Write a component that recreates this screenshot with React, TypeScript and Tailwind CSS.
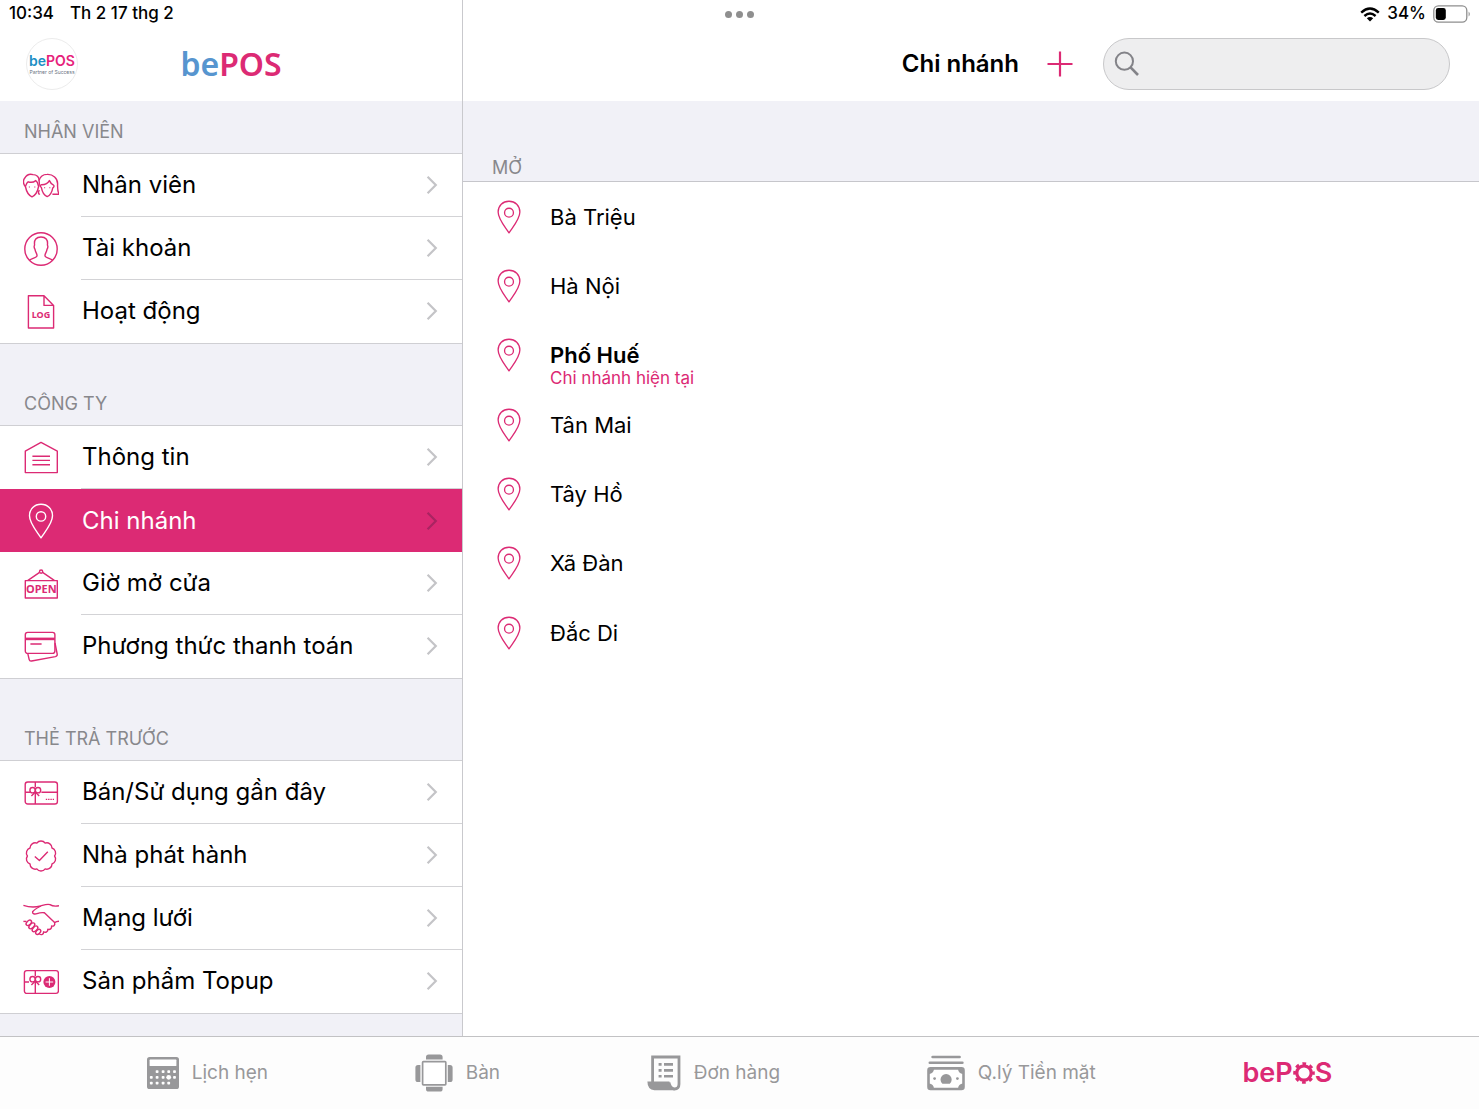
import React from 'react';

type IconProps = { className?: string };

const lineIcon = {
    viewBox: '0 0 36 36',
    fill: 'none',
    stroke: 'currentColor',
    strokeWidth: 1.4,
    strokeLinejoin: 'round' as const,
    'aria-hidden': true,
};

const StaffIcon = ({ className }: IconProps) => (
    <svg {...lineIcon} className={className}>
        <path d="M2.4 18.5 C0 16.5 0 12 1.6 10.3 C3.5 7 7 5.8 10 6.6 C13.5 6.6 16.4 9 16 12.5 C16.6 15 16.4 17 15.6 18.5" />
        <path d="M2.4 18.5 C3.4 23.5 6.2 27.6 9 28.8 C12 27.6 14.6 23.5 15.6 18.5 L14.4 14.5 L12.8 12.6 C10.5 14.4 7.5 14.6 5.2 13.8 L3.8 15.2 Z" />
        <path d="M17 26 C14.8 26.6 15.4 24.2 16.2 22 M16 12.5 C17.2 8.5 20.5 6.4 24 6.4 C30 6 34.8 10.5 34.6 16 C34.4 20 34.6 23.4 36 26.2 L29.4 26.2" />
        <path d="M18.4 19.6 C16.8 18.4 17.2 16.6 18.6 16.8 C22 16.6 25.4 14.6 26.4 12.6 C27.4 14.8 28.8 16.2 30.2 16.8 C31.6 17.4 31 19.4 29.8 19.8 C29 24 27.2 27.4 24.2 28.6 C21.2 27.4 19.2 24 18.4 19.6 Z" />
        <path d="M6.4 18.4 V19.4 M11.8 18.4 V19.4 M21.6 19.2 V20.2 M26.8 19.2 V20.2" strokeWidth="1.1" />
    </svg>
);

const AccountIcon = ({ className }: IconProps) => (
    <svg {...lineIcon} className={className}>
        <circle cx="18" cy="18" r="16.2" />
        <path d="M6.4 29.3 C7.4 27.4 13.6 27 14 24.8 C14.2 22.6 12.4 21.6 12 18.4 C10.8 16.4 11 15 11.6 14 C10.8 8.6 13.4 6 18 6 C22.6 6 25.2 8.6 24.4 14 C25 15 25.2 16.4 24 18.4 C23.6 21.6 21.8 22.6 22 24.8 C22.4 27 28.6 27.4 29.6 29.3" />
    </svg>
);

const LogIcon = ({ className }: IconProps) => (
    <svg {...lineIcon} className={className}>
        <path d="M5.4 1.8 H21 L30.6 11.4 V34 H5.4 Z M21 1.8 V11.4 H30.6" />
        <text x="18" y="24" textAnchor="middle" fill="currentColor" stroke="none" className="font-['Liberation_Sans_Narrow','Noto_Sans',sans-serif] text-[9px] font-bold">LOG</text>
    </svg>
);

const InfoIcon = ({ className }: IconProps) => (
    <svg {...lineIcon} className={className}>
        <path d="M2.3 11.2 L18 2.4 L34.3 11.2 V32.6 H2.3 Z M9.4 16.2 H27 M9.4 20.4 H27 M9.4 24.7 H27" />
    </svg>
);

const PinIcon = ({ className }: IconProps) => (
    <svg {...lineIcon} className={className}>
        <path d="M18 34.8 C13.5 28 6.5 20.4 6.5 12.8 C6.5 6 11.4 1.3 18 1.3 C24.6 1.3 29.5 6 29.5 12.8 C29.5 20.4 22.5 28 18 34.8 Z" />
        <circle cx="18" cy="13.4" r="4.7" />
    </svg>
);

const OpenIcon = ({ className }: IconProps) => (
    <svg {...lineIcon} className={className}>
        <path d="M2.3 14.6 H34.3 V32 H2.3 Z M4.6 14.6 L16.6 6.4 M31.6 14.6 L19.6 6.4" />
        <circle cx="18.1" cy="5.6" r="1.6" />
        <text x="18.3" y="27.4" textAnchor="middle" fill="currentColor" stroke="none" className="font-['Liberation_Sans_Narrow','Noto_Sans',sans-serif] text-[11px] font-bold">OPEN</text>
    </svg>
);

const CardsIcon = ({ className }: IconProps) => (
    <svg {...lineIcon} className={className}>
        <rect x="2.3" y="3.4" width="29.6" height="21" rx="2.4" />
        <path d="M2.3 9.9 H31.9" strokeWidth="2.6" />
        <path d="M7.4 15 H18.6 M4.8 24.6 L6.2 30.6 C6.5 31.8 7.4 32.2 8.6 32 L32.4 27.6 C33.8 27.3 34.4 26.4 34.2 25.2 L32 14" />
    </svg>
);

const Bow = () => (
    <>
        <circle cx="9.6" cy="15.2" r="2.7" />
        <circle cx="15" cy="15.2" r="2.7" />
        <path d="M12.3 17 L8.4 21 M12.3 17 L16.2 21" />
    </>
);

const GiftCardIcon = ({ className }: IconProps) => (
    <svg {...lineIcon} className={className}>
        <rect x="2.2" y="7" width="32.2" height="22" rx="2.6" />
        <path d="M12.3 7 V12 M12.3 18 V29 M2.2 17.2 H7 M18.4 17.2 H34.4" />
        <Bow />
        <path d="M22.8 24.4 H31" strokeDasharray="1.4 0.9" />
    </svg>
);

const TopupIcon = ({ className }: IconProps) => (
    <svg {...lineIcon} className={className}>
        <rect x="1.4" y="6.6" width="34" height="22.8" rx="2.4" />
        <path d="M12.3 6.6 V12 M12.3 18 V29.4 M1.4 18 H6" />
        <Bow />
        <circle cx="26.4" cy="18" r="6" fill="currentColor" stroke="none" />
        <path d="M22.6 18 H30.2 M26.4 14.2 V21.8" stroke="#fff" strokeWidth="1" />
    </svg>
);

const SealIcon = ({ className }: IconProps) => {
    const lobes = 10;
    const points = Array.from({ length: lobes }, (_, i) => {
        const a = ((i + 0.5) / lobes) * Math.PI * 2 - Math.PI / 2;
        return `${(18 + 13.6 * Math.cos(a)).toFixed(2)} ${(18 + 13.6 * Math.sin(a)).toFixed(2)}`;
    });
    const d = `M${points[lobes - 1]} ` + points.map((p) => `A5.2 5.2 0 0 1 ${p}`).join(' ') + ' Z';
    return (
        <svg {...lineIcon} className={className}>
            <path d={d} />
            <path d="M11.8 18.4 L16.4 22.6 L24.8 13.8" />
        </svg>
    );
};

const HandshakeIcon = ({ className }: IconProps) => (
    <svg {...lineIcon} className={className}>
        <path d="M0.4 4.4 C6 6.2 12 6.4 17.6 5 C21 4 24 2.6 27 3.6 C29 5 31 5.8 36 4.8" />
        <path d="M17.8 5 C15 6.6 11.6 8.2 9.6 10.8 C9 12.8 11.6 13.4 14 12.6 C16.4 11.8 19 11.4 21.4 11.8 L31.6 21.6" />
        <path d="M36 20.2 C33.6 20.2 32.6 20.8 31.6 21.6 C32.4 24 30.6 25.6 28.6 25 C29 27.6 27 29 24.8 28.2 C25 30.6 22.8 31.8 20.6 30.8 C20.8 33.4 18.4 34.4 16.4 33" />
        <path d="M0.4 20.4 H3.4" />
        <ellipse cx="5.8" cy="21.8" rx="3.2" ry="2" transform="rotate(-45 5.8 21.8)" />
        <ellipse cx="8.8" cy="24.8" rx="3.6" ry="2" transform="rotate(-45 8.8 24.8)" />
        <ellipse cx="12" cy="27.8" rx="3.4" ry="2" transform="rotate(-45 12 27.8)" />
        <ellipse cx="15.2" cy="30.8" rx="3" ry="1.9" transform="rotate(-45 15.2 30.8)" />
    </svg>
);

const ChevronIcon = ({ className }: IconProps) => (
    <svg viewBox="0 0 12 20" fill="none" stroke="currentColor" strokeWidth="2.2" aria-hidden="true" className={className}>
        <path d="M1.6 1.8 L9.8 10 L1.6 18.2" />
    </svg>
);

const CalendarIcon = () => {
    const dots = [[10, 14.6], [16, 14.6], [21.6, 14.6], [27.4, 14.6], [4.2, 20.2], [10, 20.2], [16, 20.2], [21.6, 20.2], [27.4, 20.2], [4.2, 26], [10, 26], [16, 26], [21.6, 26]];
    return (
        <svg viewBox="0 0 32 32" aria-hidden="true" className="size-8">
            <rect width="32" height="32" rx="2.6" fill="currentColor" />
            <rect x="2.6" y="2.6" width="26.8" height="6.4" rx="0.6" fill="#fff" />
            {dots.map(([x, y]) => (
                <rect key={`${x}-${y}`} x={x - 1.3} y={y - 1.3} width="2.8" height="2.8" rx="0.8" fill="#fff" />
            ))}
            <circle cx="21.7" cy="20.3" r="2.4" fill="#fff" />
        </svg>
    );
};

const TableIcon = () => (
    <svg viewBox="0 0 38 38" fill="currentColor" aria-hidden="true" className="size-[38px]">
        <path d="M11 5.4 V3 Q11 0.4 13.6 0.4 H25 Q27.6 0.4 27.6 3 V5.4 Z M11 32.8 V35 Q11 37.6 13.6 37.6 H25 Q27.6 37.6 27.6 35 V32.8 Z M5.4 11 H3 Q0.4 11 0.4 13.6 V25.4 Q0.4 28 3 28 H5.4 Z M32.8 11 H35 Q37.6 11 37.6 13.6 V25.4 Q37.6 28 35 28 H32.8 Z" />
        <rect x="7.6" y="7.6" width="23.2" height="23.2" rx="0.8" fill="#fff" stroke="currentColor" strokeWidth="1.7" />
    </svg>
);

const ReceiptIcon = () => (
    <svg viewBox="0 0 34 36" aria-hidden="true" className="h-9 w-[34px]">
        <path d="M5.6 27 V2 H32 V29 Q32 34 27.4 34 Q23 33.6 22 27.6" fill="none" stroke="currentColor" strokeWidth="2.8" />
        <path d="M0.4 26.4 H22.4 Q23 33 27.6 35.2 H7.4 Q0.4 34.4 0.4 26.4 Z" fill="currentColor" />
        <path d="M11.6 9.4 H14.6 M17 9.4 H26 M11.6 15.4 H14.6 M17 15.4 H26 M11.6 21.2 H14.6 M17 21.2 H26" fill="none" stroke="currentColor" strokeWidth="2.6" />
    </svg>
);

const CashIcon = () => (
    <svg viewBox="0 0 38 36" aria-hidden="true" className="h-9 w-[38px]">
        <path d="M5.6 2 H32.6 M2.8 7.8 H35.4" stroke="currentColor" strokeWidth="2.6" strokeLinecap="round" />
        <rect x="1.5" y="13.4" width="35" height="20.6" rx="2" fill="#fff" stroke="currentColor" strokeWidth="2.6" />
        <path d="M2 19 V14 H7 Q6.6 18.6 2 19 Z M36 19 V14 H31 Q31.4 18.6 36 19 Z M2 28.6 V33.6 H7 Q6.6 29 2 28.6 Z M36 28.6 V33.6 H31 Q31.4 29 36 28.6 Z" fill="currentColor" />
        <path d="M15.4 28.8 A5.6 5.6 0 1 1 22.8 28.8 Z" fill="currentColor" />
        <circle cx="7.6" cy="23.6" r="1.4" fill="currentColor" />
        <circle cx="30.4" cy="23.6" r="1.4" fill="currentColor" />
    </svg>
);

const GearIcon = () => (
    <svg viewBox="0 0 22 22" fill="none" stroke="currentColor" aria-hidden="true" className="size-[22px]">
        <circle cx="11" cy="11" r="7.2" strokeWidth="3.2" />
        <circle cx="11" cy="11" r="9.4" strokeWidth="2.8" strokeDasharray="3.7 3.68" strokeDashoffset="1.85" />
    </svg>
);

const WifiIcon = () => (
    <svg viewBox="0 0 20 15" fill="none" stroke="currentColor" strokeWidth="2.4" aria-hidden="true" className="h-[15px] w-5">
        <path d="M1.2 5.6 Q10 -2.4 18.8 5.6 M4.4 9 Q10 4 15.6 9" />
        <path d="M10 14.4 L6.8 11.2 Q10 8.6 13.2 11.2 Z" fill="currentColor" stroke="none" />
    </svg>
);

const BatteryIcon = () => (
    <svg viewBox="0 0 38 18" aria-hidden="true" className="h-[18px] w-[38px]">
        <rect x="0.8" y="0.8" width="33" height="16.4" rx="4.6" fill="none" stroke="#8e8e8e" strokeWidth="1.3" />
        <rect x="2.8" y="3" width="10" height="12" rx="2.4" fill="#000" />
        <path d="M35.6 6.4 Q38 9 35.6 11.6 Z" fill="#8e8e8e" />
    </svg>
);

const sections = [
    {
        title: 'NHÂN VIÊN',
        items: [
            { label: 'Nhân viên', Icon: StaffIcon },
            { label: 'Tài khoản', Icon: AccountIcon },
            { label: 'Hoạt động', Icon: LogIcon },
        ],
    },
    {
        title: 'CÔNG TY',
        items: [
            { label: 'Thông tin', Icon: InfoIcon },
            { label: 'Chi nhánh', Icon: PinIcon },
            { label: 'Giờ mở cửa', Icon: OpenIcon },
            { label: 'Phương thức thanh toán', Icon: CardsIcon },
        ],
    },
    {
        title: 'THẺ TRẢ TRƯỚC',
        items: [
            { label: 'Bán/Sử dụng gần đây', Icon: GiftCardIcon },
            { label: 'Nhà phát hành', Icon: SealIcon },
            { label: 'Mạng lưới', Icon: HandshakeIcon },
            { label: 'Sản phẩm Topup', Icon: TopupIcon },
        ],
    },
];

const branches = ['Bà Triệu', 'Hà Nội', 'Phố Huế', 'Tân Mai', 'Tây Hồ', 'Xã Đàn', 'Đắc Di'];
const currentBranch = 'Phố Huế';

const tabs = [
    { label: 'Lịch hẹn', Icon: CalendarIcon },
    { label: 'Bàn', Icon: TableIcon },
    { label: 'Đơn hàng', Icon: ReceiptIcon },
    { label: 'Q.lý Tiền mặt', Icon: CashIcon },
];

const Sidebar = () => {
    const [active, setActive] = React.useState('Chi nhánh');

    return (
        <aside className="w-[463px] shrink-0 flex flex-col border-r border-[#c9c9cd] bg-[#f1f1f7]">
            <div className="h-[101px] flex flex-col bg-white">
                <div className="h-7 flex items-center gap-4 pl-[9px] text-[17px] font-medium">
                    <span>10:34</span>
                    <span>Th 2 17 thg 2</span>
                </div>
                <div className="flex-1 grid grid-cols-[1fr_auto_1fr] items-center px-[26px] pb-px">
                    <div className="size-[52px] rounded-full border border-[#ececec] flex flex-col items-center justify-center">
                        <span className="text-[14px] leading-4 font-semibold text-[#e6217a]"><span className="text-[#1c8fc4]">be</span>POS</span>
                        <span className="text-[5px] leading-[6px] text-gray-500">Partner of Success</span>
                    </div>
                    <span className="font-['Noto_Sans',sans-serif] text-[32px] leading-10 font-semibold text-[#dc2a74]"><span className="text-[#5795cf]">be</span>POS</span>
                </div>
            </div>

            <nav>
                {sections.map((section) => (
                    <section key={section.title} className="group">
                        <h2 className="h-[81px] group-first:h-[52px] flex items-end pb-[9px] pl-6 text-[18px] leading-6 text-[#88888c]">{section.title}</h2>
                        <ul className="border-y border-[#cfcfd3] bg-white">
                            {section.items.map(({ label, Icon }) => {
                                const selected = label === active;
                                return (
                                    <li key={label} className="group/row">
                                        <button
                                            type="button"
                                            onClick={() => setActive(label)}
                                            className={`w-full h-[63px] flex items-center pl-[23px] text-left text-[24px] ${selected ? 'bg-[#dc2a74] text-white' : 'text-black'}`}
                                        >
                                            <Icon className={`size-9 shrink-0 ${selected ? 'text-white' : 'text-[#dc2a74]'}`} />
                                            <span className={`flex-1 h-full ml-[22px] pl-px pr-6 flex items-center justify-between ${selected ? '' : 'border-b border-[#d3d3d6] group-last/row:border-transparent'}`}>
                                                {label}
                                                <ChevronIcon className={`h-5 w-3 ${selected ? 'text-[#a92461]' : 'text-[#c4c4c7]'}`} />
                                            </span>
                                        </button>
                                    </li>
                                );
                            })}
                        </ul>
                    </section>
                ))}
            </nav>
        </aside>
    );
};

const BranchPanel = () => (
    <main className="flex-1 min-w-0 flex flex-col">
        <div className="h-[101px] flex flex-col">
            <div className="h-7 flex items-center justify-end gap-[7px] pr-2 text-[17px] font-medium">
                <WifiIcon />
                <span>34%</span>
                <BatteryIcon />
            </div>
            <div className="flex-1 flex items-center justify-end pr-[29px] pb-px">
                <h1 className="text-[24px] font-semibold">Chi nhánh</h1>
                <button type="button" aria-label="Thêm chi nhánh" className="ml-7 mr-[30px] text-[#dc2a74]">
                    <svg viewBox="0 0 26 26" stroke="currentColor" strokeWidth="2.2" aria-hidden="true" className="size-[26px]">
                        <path d="M13 0.5 V25.5 M0.5 13 H25.5" />
                    </svg>
                </button>
                <label className="w-[347px] h-[52px] flex items-center gap-3 rounded-full border border-[#c8c8ca] bg-[#eeeeef] px-[10px]">
                    <svg viewBox="0 0 26 26" fill="none" stroke="#838388" strokeWidth="2" aria-hidden="true" className="size-[26px] shrink-0">
                        <circle cx="10.4" cy="10.2" r="8.6" />
                        <path d="M16.6 16.4 L24 24" strokeWidth="2.6" />
                    </svg>
                    <input type="search" aria-label="Tìm kiếm" className="flex-1 min-w-0 bg-transparent text-[20px] outline-none" />
                </label>
            </div>
        </div>

        <h2 className="h-[81px] flex items-end border-b border-[#c6c6cb] bg-[#f1f1f7] pl-[29px] pb-px text-[18px] leading-6 text-[#88888c]">MỞ</h2>

        <ul>
            {branches.map((name) => (
                <li key={name} className="h-[69px] nth-[3n]:h-[70px] flex items-start gap-6 pt-[18px] pl-[29px]">
                    <PinIcon className="size-[34px] shrink-0 text-[#dc2a74]" />
                    <div className="pt-[2px]">
                        <p className={`text-[22px] leading-[30px] ${name === currentBranch ? 'font-semibold' : ''}`}>{name}</p>
                        {name === currentBranch && <p className="text-[17px] leading-4 text-[#dc2a74]">Chi nhánh hiện tại</p>}
                    </div>
                </li>
            ))}
        </ul>
    </main>
);

const TabBar = () => (
    <nav className="h-[73px] flex items-center justify-evenly border-t border-[#c2c2c4] bg-[#fdfdfd] text-[#98989a]">
        {tabs.map(({ label, Icon }) => (
            <button key={label} type="button" className="flex items-center gap-[13px] text-[19px]">
                <Icon />
                <span>{label}</span>
            </button>
        ))}
        <button type="button" aria-label="bePOS" className="flex items-center text-[27px] leading-8 font-semibold text-[#dc2a74]">
            <span>beP</span>
            <GearIcon />
            <span>S</span>
        </button>
    </nav>
);

const App = () => {
    return (
        <div className="relative min-h-screen flex flex-col bg-white font-[Inter,sans-serif] text-black">
            {/* multitasking dots */}
            <div className="absolute top-[11px] inset-x-0 flex justify-center gap-1">
                <span className="size-[7px] rounded-full bg-[#8f8f8f]" />
                <span className="size-[7px] rounded-full bg-[#8f8f8f]" />
                <span className="size-[7px] rounded-full bg-[#8f8f8f]" />
            </div>

            <div className="flex-1 flex">
                <Sidebar />
                <BranchPanel />
            </div>

            <TabBar />
        </div>
    )
}

export default App;
